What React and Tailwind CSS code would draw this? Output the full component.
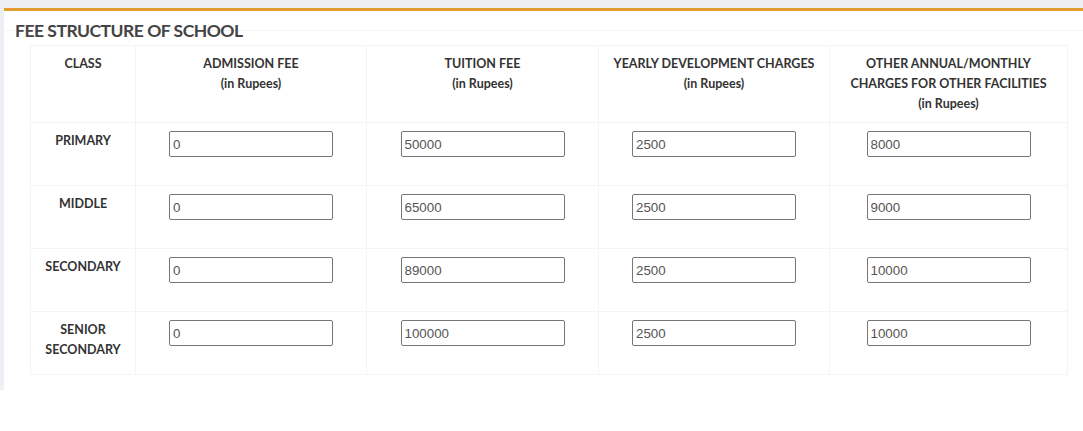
const rows = [
  { label: ['PRIMARY'], values: ['0', '50000', '2500', '8000'] },
  { label: ['MIDDLE'], values: ['0', '65000', '2500', '9000'] },
  { label: ['SECONDARY'], values: ['0', '89000', '2500', '10000'] },
  { label: ['SENIOR', 'SECONDARY'], values: ['0', '100000', '2500', '10000'] },
]

const headers = [
  { w: 'w-[105px]', lines: ['CLASS'] },
  { w: 'w-[231px]', lines: ['ADMISSION FEE', '(in Rupees)'] },
  { w: 'w-[232px]', lines: ['TUITION FEE', '(in Rupees)'] },
  { w: 'w-[231px]', lines: ['YEARLY DEVELOPMENT CHARGES', '(in Rupees)'] },
  { w: 'w-[238px]', lines: ['OTHER ANNUAL/MONTHLY', 'CHARGES FOR OTHER FACILITIES', '(in Rupees)'] },
]

function FeeInput({ value }) {
  return (
    <input
      type="text"
      defaultValue={value}
      className="w-[164px] h-[26px] border border-[#767676] rounded-[2px] px-[3px] text-[13.33px] text-[#555] font-['Liberation_Sans',Arial,sans-serif] bg-white outline-none"
    />
  )
}

export default function App() {
  return (
    <div className="min-h-[431px] bg-white font-['Lato',sans-serif]">
      <div className="bg-[#ecf0f5] pt-[8px] pl-[4px] h-[390px]">
        <div className="bg-white border-t-[3px] border-[#e39d33] h-[382px]">
          <div className="h-[20px] border-b border-[#f4f4f4] pl-[11px]">
            <h3 className="text-[17.5px] font-bold text-[#444] leading-[20px] pt-[10px] tracking-[-0.5px] whitespace-nowrap">
              FEE STRUCTURE OF SCHOOL
            </h3>
          </div>
          <div className="pl-[26px] pt-[14px]">
            <table className="border-collapse text-[12.5px] text-[#333] table-fixed">
              <thead>
                <tr>
                  {headers.map((h, i) => (
                    <th key={i} className={`${h.w} h-[77px] border border-[#f4f4f4] px-2 py-2 align-top font-bold leading-[20px] text-center`}>
                      {h.lines.map((l, j) => (
                        <div key={j}>{l}</div>
                      ))}
                    </th>
                  ))}
                </tr>
              </thead>
              <tbody>
                {rows.map((r, i) => (
                  <tr key={i}>
                    <td className="h-[63px] border border-[#f4f4f4] px-2 py-2 align-top font-bold leading-[20px] text-center">
                      {r.label.map((l, j) => (
                        <div key={j}>{l}</div>
                      ))}
                    </td>
                    {r.values.map((v, j) => (
                      <td key={j} className="h-[63px] border border-[#f4f4f4] px-2 py-2 align-top text-center">
                        <FeeInput value={v} />
                      </td>
                    ))}
                  </tr>
                ))}
              </tbody>
            </table>
          </div>
        </div>
      </div>
    </div>
  )
}
